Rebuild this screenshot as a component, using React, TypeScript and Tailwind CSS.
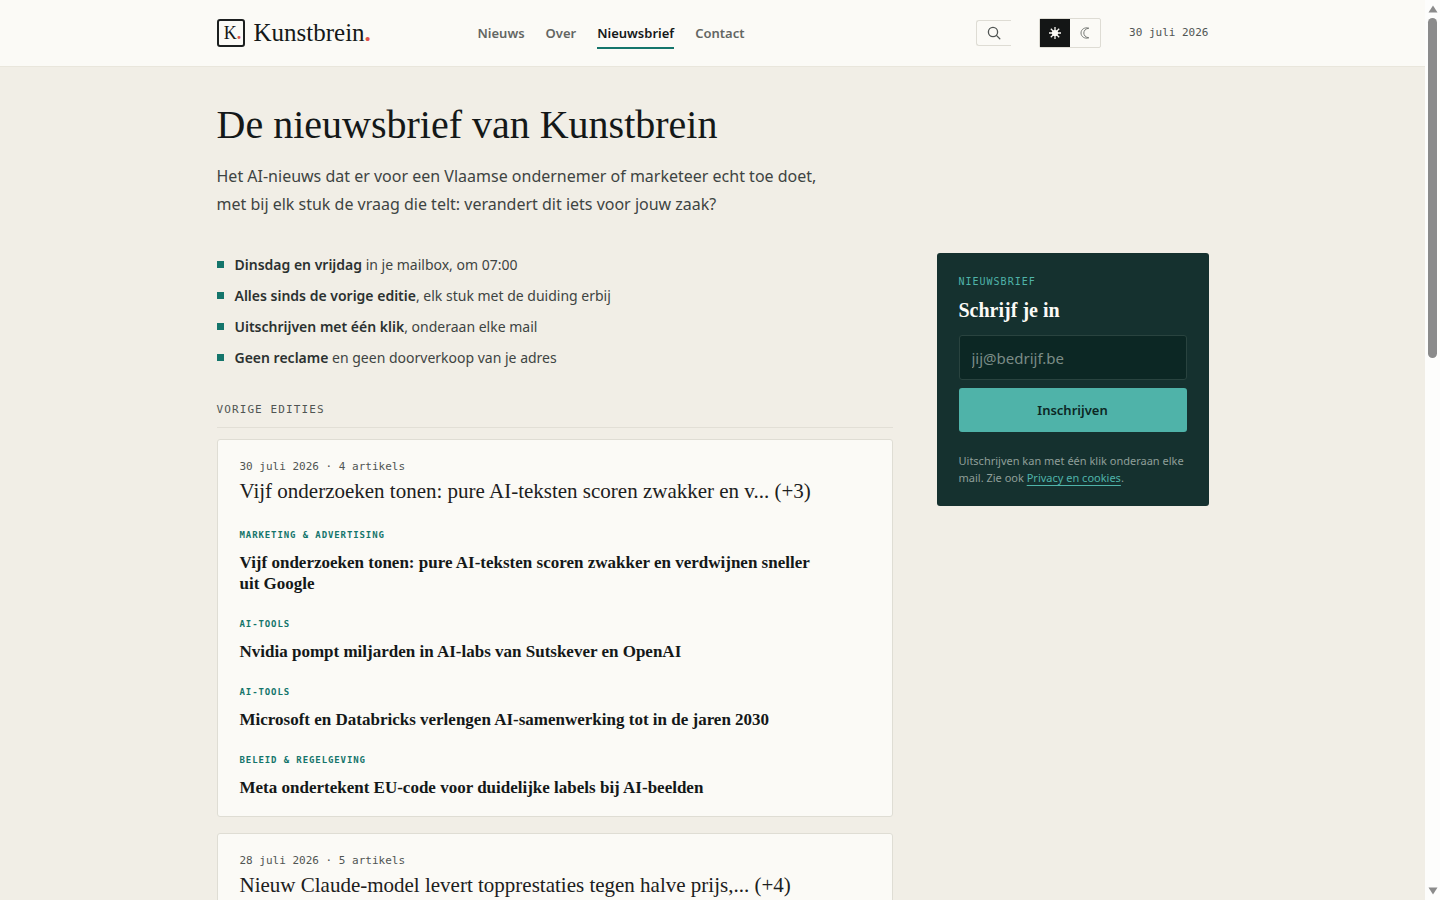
import React from 'react';

interface Article {
  category: string;
  title: string;
}

interface Edition {
  date: string;
  count: number;
  title: string;
  articles: Article[];
}

const navItems = ['Nieuws', 'Over', 'Nieuwsbrief', 'Contact'];

const perks = [
  { strong: 'Dinsdag en vrijdag', rest: ' in je mailbox, om 07:00' },
  { strong: 'Alles sinds de vorige editie', rest: ', elk stuk met de duiding erbij' },
  { strong: 'Uitschrijven met één klik', rest: ', onderaan elke mail' },
  { strong: 'Geen reclame', rest: ' en geen doorverkoop van je adres' },
];

const editions: Edition[] = [
  {
    date: '30 juli 2026',
    count: 4,
    title: 'Vijf onderzoeken tonen: pure AI-teksten scoren zwakker en v... (+3)',
    articles: [
      {
        category: 'Marketing & Advertising',
        title: 'Vijf onderzoeken tonen: pure AI-teksten scoren zwakker en verdwijnen sneller uit Google',
      },
      { category: 'AI-tools', title: 'Nvidia pompt miljarden in AI-labs van Sutskever en OpenAI' },
      { category: 'AI-tools', title: 'Microsoft en Databricks verlengen AI-samenwerking tot in de jaren 2030' },
      { category: 'Beleid & regelgeving', title: 'Meta ondertekent EU-code voor duidelijke labels bij AI-beelden' },
    ],
  },
  {
    date: '28 juli 2026',
    count: 5,
    title: 'Nieuw Claude-model levert topprestaties tegen halve prijs,... (+4)',
    articles: [],
  },
];

const SearchIcon = () => (
  <svg className="w-3.5 h-3.5" viewBox="0 0 14 14" fill="none" stroke="currentColor" strokeWidth="1.3" aria-hidden="true">
    <circle cx="6" cy="6" r="4.6" />
    <path d="M9.4 9.4 12.8 12.8" strokeLinecap="round" />
  </svg>
);

const SunIcon = () => (
  <svg className="w-3.5 h-3.5" viewBox="0 0 14 14" fill="currentColor" stroke="currentColor" strokeWidth="1.3" aria-hidden="true">
    <circle cx="7" cy="7" r="3.1" stroke="none" />
    <path d="M7 1v12M1 7h12M2.8 2.8l8.4 8.4M11.2 2.8l-8.4 8.4" />
  </svg>
);

const MoonIcon = () => (
  <svg className="w-3.5 h-3.5" viewBox="0 0 14 14" fill="none" stroke="currentColor" strokeWidth="0.9" aria-hidden="true">
    <path d="M10.8 2.2C6.6.9 3 3.4 3 7s3.6 6.1 7.8 4.8C7.6 11.3 5.8 9.4 5.8 7s1.8-4.3 5-4.8Z" />
  </svg>
);

const Header: React.FC = () => (
  <header className="bg-[#fbfaf6] border-b border-[#e9e6dc]">
    <div className="max-w-[1040px] mx-auto px-6 h-[66px] flex items-center">
      <a href="#" className="flex items-center gap-[9px] w-[261px] text-[#141818]">
        <span className="w-7 h-7 pl-1 border-2 border-[#1c1f1f] rounded-[3px] flex items-center justify-center font-['Liberation_Serif',serif] text-lg leading-none">
          K<span className="text-[#e0524a] font-bold">.</span>
        </span>
        <span className="font-['Liberation_Serif',serif] text-[25px] leading-7">
          Kunstbrein<span className="text-[#e0524a] font-bold">.</span>
        </span>
      </a>
      <nav className="flex gap-[21px]">
        {navItems.map((item) => (
          <a
            key={item}
            href="#"
            className={
              item === 'Nieuwsbrief'
                ? 'pt-1.5 pb-1 border-b-2 border-[#14756b] text-[13px] leading-5 font-semibold text-[#141818]'
                : 'pt-1.5 pb-1 border-b-2 border-transparent text-[13px] leading-5 font-semibold text-[#636663]'
            }
          >
            {item}
          </a>
        ))}
      </nav>
      <div className="ml-auto flex items-center gap-7">
        <button
          type="button"
          aria-label="Zoeken"
          className="w-[35px] h-[26px] flex items-center justify-center border border-r-0 border-[#dedcd4] rounded-l-[3px] text-[#505553]"
        >
          <SearchIcon />
        </button>
        <div className="flex border border-[#dedcd4] rounded-xs">
          <button type="button" aria-label="Licht thema" className="w-[30px] h-7 flex items-center justify-center bg-[#141616] text-[#fbfaf6]">
            <SunIcon />
          </button>
          <button type="button" aria-label="Donker thema" className="w-[30px] h-7 flex items-center justify-center text-[#6a6d6a]">
            <MoonIcon />
          </button>
        </div>
        <span className="font-['DejaVu_Sans_Mono',monospace] text-[11px] leading-[18px] text-[#505553]">30 juli 2026</span>
      </div>
    </div>
  </header>
);

const EditionCard: React.FC<{ edition: Edition }> = ({ edition }) => (
  <article className="bg-[#fbfaf6] border border-[#dfddd4] rounded-[3px] px-[22px] py-[18px]">
    <p className="font-['DejaVu_Sans_Mono',monospace] text-[11px] leading-[18px] text-[#505553]">
      {edition.date} · {edition.count} artikels
    </p>
    <h3 className="mt-0.5 font-['Liberation_Serif',serif] text-[21px] leading-[26px] text-[#1c2020]">{edition.title}</h3>
    {edition.articles.length > 0 && (
      <ul className="mt-6 flex flex-col gap-[23px]">
        {edition.articles.map((article) => (
          <li key={article.title}>
            <p className="font-['DejaVu_Sans_Mono',monospace] text-[9px] leading-[14px] font-bold uppercase tracking-widest text-[#14756b]">
              {article.category}
            </p>
            <a
              href="#"
              className="mt-2.5 block max-w-[580px] font-['Liberation_Serif',serif] text-[17px] leading-[21px] font-bold text-[#141818]"
            >
              {article.title}
            </a>
          </li>
        ))}
      </ul>
    )}
  </article>
);

const SignupCard: React.FC = () => (
  <aside className="w-[272px] shrink-0 self-start bg-[#15312f] rounded-[3px] px-[22px] pt-[22px] pb-5">
    <p className="font-['DejaVu_Sans_Mono',monospace] text-[10px] leading-[14px] uppercase tracking-widest text-[#4fb3a9]">Nieuwsbrief</p>
    <h2 className="mt-2 font-['Liberation_Serif',serif] text-xl leading-[26px] font-bold text-[#fbfaf6]">Schrijf je in</h2>
    <form className="mt-3 flex flex-col gap-2" onSubmit={(e) => e.preventDefault()}>
      <input
        type="email"
        aria-label="E-mailadres"
        placeholder="jij@bedrijf.be"
        className="w-full h-[45px] px-3 bg-[#0c2724] border border-[#29433f] rounded-[3px] text-[15px] text-[#fbfaf6] placeholder:text-[#7b8c86]"
      />
      <button type="submit" className="h-11 pt-0.5 bg-[#4fb3a9] rounded-[3px] text-[13px] font-semibold text-[#0c2724]">
        Inschrijven
      </button>
    </form>
    <p className="mt-5 text-[11px] leading-[17px] text-[#8f9f99]">
      Uitschrijven kan met één klik onderaan elke mail. Zie ook{' '}
      <a href="#" className="text-[#4fb3a9] underline underline-offset-3">Privacy en cookies</a>.
    </p>
  </aside>
);

const Scrollbar: React.FC = () => (
  <div className="w-[15px] shrink-0 bg-[#fdfdfc] flex flex-col items-center py-1" aria-hidden="true">
    <svg className="w-2.5 h-2.5" viewBox="0 0 10 10" fill="#8b8b8b">
      <path d="M5 1.5 9.5 8.5h-9z" />
    </svg>
    <div className="mt-1 w-[9px] h-[340px] rounded-full bg-[#8b8b8b]" />
    <svg className="w-2.5 h-2.5 mt-auto" viewBox="0 0 10 10" fill="#8b8b8b">
      <path d="M5 8.5 9.5 1.5h-9z" />
    </svg>
  </div>
);

export default function App() {
  return (
    <div className="flex h-screen overflow-hidden font-['Noto_Sans',sans-serif]">
      <div className="flex-1 overflow-y-auto [scrollbar-width:none] bg-[#f1eee6]">
        <Header />
        <main className="max-w-[1040px] mx-auto px-6 pt-9 pb-12">
          <h1 className="font-['Liberation_Serif',serif] text-[40px] leading-[44px] text-[#141818]">De nieuwsbrief van Kunstbrein</h1>
          <p className="mt-[15px] max-w-[620px] text-base leading-7 text-[#3e4442]">
            Het AI-nieuws dat er voor een Vlaamse ondernemer of marketeer echt toe doet, met bij elk stuk de vraag die telt: verandert dit
            iets voor jouw zaak?
          </p>
          <div className="mt-[35px] flex gap-11">
            <div className="flex-1 min-w-0">
              <ul className="flex flex-col gap-2">
                {perks.map((perk) => (
                  <li key={perk.strong} className="flex items-center gap-[11px] text-sm leading-[23px] text-[#3e4442]">
                    <span className="w-[7px] h-[7px] bg-[#14756b]" />
                    <span>
                      <strong className="font-semibold text-[#2b3130]">{perk.strong}</strong>
                      {perk.rest}
                    </span>
                  </li>
                ))}
              </ul>
              <h2 className="mt-8 pb-2 border-b border-[#e2dfd6] font-['DejaVu_Sans_Mono',monospace] text-[11px] leading-[18px] uppercase tracking-widest text-[#505553]">
                Vorige edities
              </h2>
              <div className="mt-[11px] flex flex-col gap-4">
                {editions.map((edition) => (
                  <EditionCard key={edition.date} edition={edition} />
                ))}
              </div>
            </div>
            <SignupCard />
          </div>
        </main>
      </div>
      <Scrollbar />
    </div>
  );
}
